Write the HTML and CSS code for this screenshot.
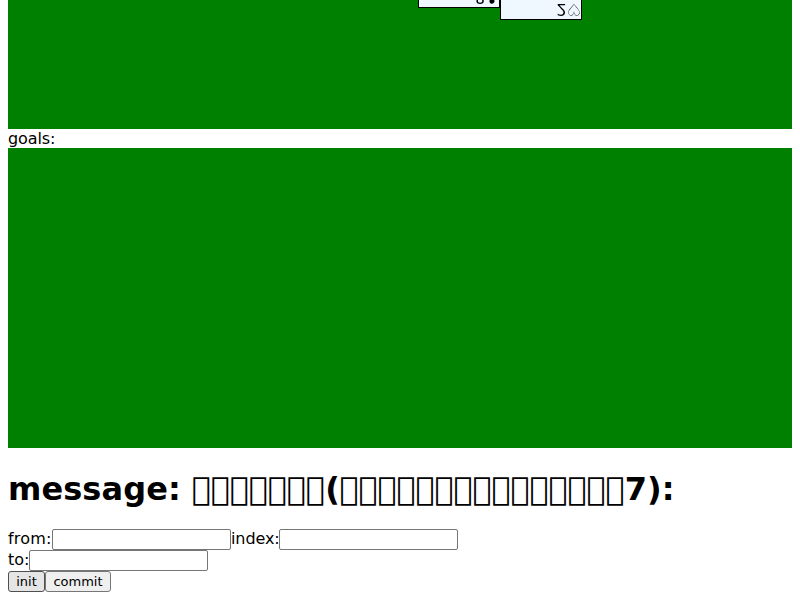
FILE: index.html
```html
<!DOCTYPE html>
<html lang="en">
<head>
<meta charset="utf-8">
<title>Cards</title>
<link rel="stylesheet" href="styles.css">
</head>
<body>
<div class="field">
  <div class="card card-club"><span class="rank">8</span>♣</div>
  <div class="card card-heart">2♡</div>
</div>
<div class="label">goals:</div>
<div class="goals"></div>
<h1><span class="lead">message: </span><span class="boxes">&#xF1234;&#xF1234;&#xF1234;&#xF1234;&#xF1234;&#xF1234;&#xF1234;</span>(<span class="boxes">&#xF1234;&#xF1234;&#xF1234;&#xF1234;&#xF1234;&#xF1234;&#xF1234;&#xF1234;&#xF1234;&#xF1234;&#xF1234;&#xF1234;&#xF1234;&#xF1234;&#xF1234;</span>7):</h1>
<div class="row"><span class="from">from:</span><input type="text"><span class="index">index:</span><input type="text"></div>
<div class="row"><span class="to">to:</span><input type="text"></div>
<div class="row"><button class="active">init</button><button>commit</button></div>
</body>
</html>
```
FILE: styles.css
```css
html {
  overflow: hidden;
}
body {
  margin: 0 8px;
  font-family: "DejaVu Sans", sans-serif;
  font-size: 16px;
}
.field {
  position: relative;
  height: 129px;
  overflow: hidden;
  background: green;
}
.card {
  position: absolute;
  box-sizing: border-box;
  width: 82px;
  height: 122px;
  border: 1px solid #000;
  background: aliceblue;
  text-align: right;
  line-height: 19px;
  transform: rotateX(180deg);
}
.card-club {
  left: 410px;
  top: -114px;
}
.rank {
  letter-spacing: -0.6px;
}
.card-heart {
  left: 492px;
  top: -102px;
}
.label {
  height: 19px;
  line-height: 19px;
  letter-spacing: -0.1px;
}
.goals {
  height: 300px;
  background: green;
}
h1 {
  margin: 22px 0 21px;
  font-size: 32px;
  line-height: 38px;
  white-space: nowrap;
}
.lead {
  letter-spacing: 0.09px;
}
.boxes {
  letter-spacing: -0.2px;
}
.row {
  display: flex;
  height: 21px;
  line-height: 19px;
}
.from {
  width: 44px;
  letter-spacing: 0.2px;
}
.index {
  width: 48px;
  letter-spacing: -0.1px;
}
.to {
  width: 21px;
}
input {
  box-sizing: border-box;
  width: 179px;
  height: 21px;
  margin: 0;
  padding: 1px 2px;
  border: 1px solid #767676;
  border-radius: 2px;
}
button {
  box-sizing: border-box;
  height: 21px;
  margin: 0;
  padding: 1px 7px;
  border: 1px solid #767676;
  border-radius: 3px;
  background: #efefef;
  color: #000;
  font: 13px/17px "DejaVu Sans", sans-serif;
}
button:not(.active) {
  width: 66px;
}
.active {
  width: 37px;
  border-color: #4f4f4f;
  background: #e5e5e5;
}
```
